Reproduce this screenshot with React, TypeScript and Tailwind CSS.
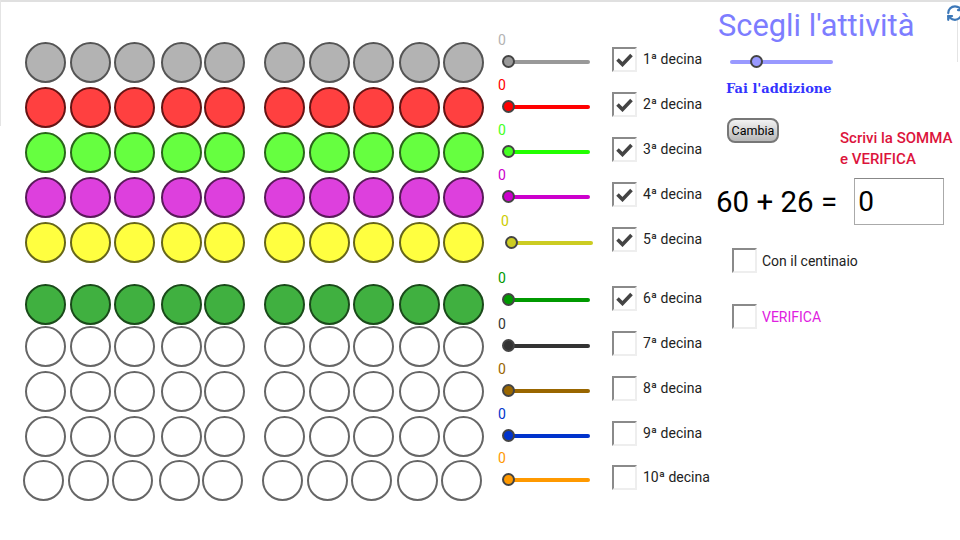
import { RefreshCw } from 'lucide-react'

const decine = [
  { n: '1ª', top: 'mt-[42px]', fill: 'bg-[#b3b3b3]', border: 'border-[#555]', labelColor: 'text-[#b3b3b3]', track: 'bg-[#999999]', knob: 'bg-[#999999]', on: true, slider: '-mt-[10px]', check: 'mt-[5px]' },
  { n: '2ª', top: 'mt-[4px]', fill: 'bg-[#ff4040]', border: 'border-[#661414]', labelColor: 'text-[#ff0000]', track: 'bg-[#ff0000]', knob: 'bg-[#ff0000]', on: true, slider: '-mt-[10px]', check: 'mt-[5px]' },
  { n: '3ª', top: 'mt-[4px]', fill: 'bg-[#66ff40]', border: 'border-[#2a661a]', labelColor: 'text-[#44ff22]', track: 'bg-[#22ff00]', knob: 'bg-[#44ff22]', on: true, slider: '-mt-[10px]', check: 'mt-[5px]' },
  { n: '4ª', top: 'mt-[4px]', fill: 'bg-[#dd40dd]', border: 'border-[#5a1a5a]', labelColor: 'text-[#cc00cc]', track: 'bg-[#cc00cc]', knob: 'bg-[#cc00cc]', on: true, slider: '-mt-[10px]', check: 'mt-[5px]' },
  { n: '5ª', top: 'mt-[4px]', fill: 'bg-[#ffff40]', border: 'border-[#66661a]', labelColor: 'text-[#cccc00]', track: 'bg-[#cccc22]', knob: 'bg-[#cccc22]', on: true, slider: '-mt-[9px] ml-[3px]', check: 'mt-[5px]' },
  { n: '6ª', top: 'mt-[21px]', fill: 'bg-[#40b040]', border: 'border-[#1a4a1a]', labelColor: 'text-[#009900]', track: 'bg-[#009900]', knob: 'bg-[#009900]', on: true, slider: '-mt-[14px]', check: 'mt-[2px]' },
  { n: '7ª', top: 'mt-[1px]', fill: 'bg-white', border: 'border-[#666]', labelColor: 'text-[#333333]', track: 'bg-[#333333]', knob: 'bg-[#333333]', on: false, slider: '-mt-[10px]', check: 'mt-[5px]' },
  { n: '8ª', top: 'mt-[4px]', fill: 'bg-white', border: 'border-[#666]', labelColor: 'text-[#996600]', track: 'bg-[#996600]', knob: 'bg-[#996600]', on: false, slider: '-mt-[10px]', check: 'mt-[5px]' },
  { n: '9ª', top: 'mt-[4px]', fill: 'bg-white', border: 'border-[#666]', labelColor: 'text-[#0033cc]', track: 'bg-[#0033cc]', knob: 'bg-[#0033cc]', on: false, slider: '-mt-[10px]', check: 'mt-[5px]' },
  { n: '10ª', top: 'mt-[3px]', fill: 'bg-white', border: 'border-[#666]', labelColor: 'text-[#ff9900]', track: 'bg-[#ff9900]', knob: 'bg-[#ff9900]', on: false, slider: '-mt-[10px]', check: 'mt-[5px]' },
]

const circleGaps = ['ml-0', 'ml-[4px]', 'ml-[3px]', 'ml-[6px]', 'ml-[2px]', 'ml-[19px]', 'ml-[4px]', 'ml-[3px]', 'ml-[5px]', 'ml-[3px]']

const CheckBox = ({ on }: { on: boolean }) => (
  <div className="flex h-[25px] w-[25px] shrink-0 items-center justify-center border-2 border-t-[#8a8a8a] border-l-[#8a8a8a] border-r-[#eeeeee] border-b-[#eeeeee] bg-white">
    {on && (
      <svg width="17" height="14" viewBox="0 0 17 14" fill="none">
        <path d="M1.5 6.5 L6.5 11.5 L15.5 2" stroke="#444" strokeWidth="3.6" />
      </svg>
    )}
  </div>
)

const Row = ({ d, last }: { d: (typeof decine)[number]; last: boolean }) => (
  <div className={`flex items-start ${d.top}`}>
    <div className={`flex w-[484px] shrink-0 ${last ? 'pl-[23px]' : 'pl-[25px]'}`}>
      {circleGaps.map((gap, i) => (
        <div key={i} className={`h-[41px] w-[41px] shrink-0 rounded-full border-2 ${gap} ${d.fill} ${d.border}`} />
      ))}
    </div>
    <div className="ml-[16px] w-[90px] shrink-0">
      <div className={`flex flex-col ${d.slider}`}>
        <span className={`-ml-[2px] h-[16px] text-[14px] leading-[16px] ${d.labelColor}`}>0</span>
        <div className="relative mt-[7px] flex h-[13px] w-[90px] items-center">
          <div className={`ml-[4px] h-[4px] w-[86px] rounded-full ${d.track}`} />
          <div className={`absolute left-[2px] h-[13px] w-[13px] rounded-full border-2 border-[#444] ${d.knob}`} />
        </div>
      </div>
    </div>
    <div className={`ml-[22px] flex shrink-0 items-center gap-[6px] ${d.check}`}>
      <CheckBox on={d.on} />
      <span className="whitespace-nowrap text-[14px] text-[#222]">{d.n} decina</span>
    </div>
  </div>
)

export default function App() {
  return (
    <div className="relative h-[540px] w-[960px] overflow-hidden bg-white font-['Roboto',sans-serif] text-black">
      <div className="absolute left-0 right-0 top-0 h-[2px] bg-[#e0e0e0]" />
      <div className="absolute left-0 top-0 h-[126px] w-px bg-[#e4e4e4]" />
      <div className="absolute left-[957px] top-[20px] h-[42px] w-px bg-[#e4e4e4]" />
      <RefreshCw className="absolute left-[946px] top-[4px] text-[#3d78b8]" size={18} strokeWidth={3} />

      <div className="flex">
        <div className="w-[716px] shrink-0">
          {decine.map((d, i) => (
            <Row key={d.n} d={d} last={i === 9} />
          ))}
        </div>

        <div className="flex min-w-0 flex-1 flex-col">
          <h1 className="ml-[2px] mt-[9px] whitespace-nowrap text-[30.8px] leading-[34px] text-[#7d7dff]">Scegli l'attività</h1>

          <div className="relative ml-[14px] mt-[12px] flex h-[13px] w-[103px] items-center">
            <div className="h-[4px] w-full rounded-full bg-[#9999ff]" />
            <div className="absolute left-[20px] h-[13px] w-[13px] rounded-full border-2 border-[#444] bg-[#9999ff]" />
          </div>

          <p className="ml-[10px] mt-[13px] whitespace-nowrap font-['DejaVu_Serif',serif] text-[13px] font-bold leading-[16px] text-[#3333ff]">Fai l'addizione</p>

          <div className="mt-[15px] flex items-start">
            <button className="ml-[11px] mt-[6px] h-[25px] w-[52px] rounded-[8px] border-2 border-[#777] bg-gradient-to-b from-[#f2f2f2] to-[#b8b8b8] text-[12.5px] leading-[16px]">Cambia</button>
            <p className="ml-[61px] mt-[16px] whitespace-nowrap text-[15px] font-medium leading-[21px] text-[#dc143c]">
              Scrivi la SOMMA<br />e VERIFICA
            </p>
          </div>

          <div className="mt-[8px] flex items-center">
            <span className="whitespace-nowrap text-[29.5px] leading-[46px]">60 + 26 =</span>
            <div className="ml-[17px] flex h-[47px] w-[90px] items-center border border-[#aaa] border-t-[#888] pl-[3px] text-[28px]">0</div>
          </div>

          <div className="ml-[16px] mt-[23px] flex items-center gap-[5px]">
            <CheckBox on={false} />
            <span className="whitespace-nowrap pt-px text-[14px] text-[#222]">Con il centinaio</span>
          </div>

          <div className="ml-[16px] mt-[31px] flex items-center gap-[5px]">
            <CheckBox on={false} />
            <span className="whitespace-nowrap pt-px text-[14px] text-[#e020e0]">VERIFICA</span>
          </div>
        </div>
      </div>
    </div>
  )
}
